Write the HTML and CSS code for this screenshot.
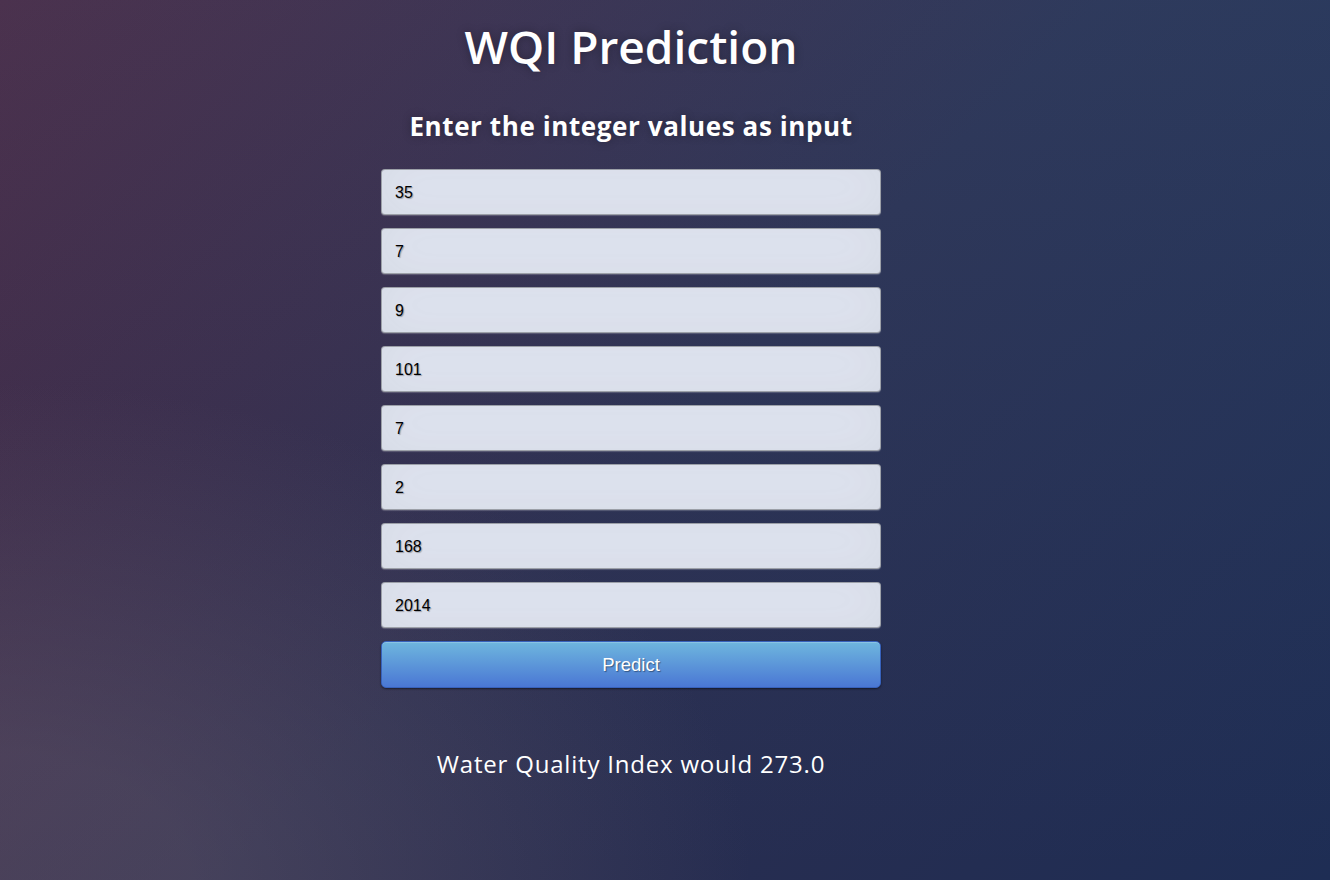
FILE: index.html
```html
<!DOCTYPE html>
<html lang="en">
<head>
<meta charset="utf-8">
<title>WQI Prediction</title>
<link rel="stylesheet" href="styles.css">
</head>
<body>
<div class="page">
  <div class="login">
    <h1 class="title">WQI Prediction</h1>
    <h2 class="subtitle">Enter the integer values as input</h2>
    <form class="form">
      <input class="field" type="text" value="35">
      <input class="field" type="text" value="7">
      <input class="field" type="text" value="9">
      <input class="field" type="text" value="101">
      <input class="field" type="text" value="7">
      <input class="field" type="text" value="2">
      <input class="field" type="text" value="168">
      <input class="field" type="text" value="2014">
      <button class="btn" type="button">Predict</button>
    </form>
    <p class="result">Water Quality Index would 273.0</p>
  </div>
</div>
</body>
</html>
```

FILE: styles.css
```css
* { box-sizing: border-box; }
html, body { margin: 0; width: 100%; height: 100%; overflow: hidden; }
body {
  font-family: "Open Sans", sans-serif;
  background:
    radial-gradient(ellipse farthest-corner at 0% 100%, rgba(115,105,118,.35) 10%, rgba(115,105,118,0) 40%),
    linear-gradient(to bottom, rgba(57,173,219,.1) 0%, rgba(57,173,219,0) 100%),
    linear-gradient(135deg, #4d243e 0%, #2d2d4e 50%, #1e2d54 100%);
}
.page { height: 100%; padding-top: 18px; }
.login { width: 500px; margin-left: 381px; }
.title {
  margin: 0;
  font-size: 46px;
  line-height: 56px;
  font-weight: 600;
  color: #fff;
  text-align: center;
  letter-spacing: 0;
  text-shadow: 0 0 10px rgba(0,0,0,0.3);
}
.subtitle {
  margin: 37px 0 28px;
  font-size: 26px;
  line-height: 30px;
  font-weight: 700;
  color: #fff;
  text-align: center;
  letter-spacing: 0.6px;
  text-shadow: 0 0 10px rgba(0,0,0,0.3);
}
.form { display: flex; flex-direction: column; gap: 13px; margin: 0; }
.field {
  display: block;
  width: 100%;
  height: 46px;
  margin: 0;
  padding: 2px 13px 0;
  font-family: "Liberation Sans", Arial, sans-serif;
  font-size: 16px;
  color: #000;
  background: #e0e5f1;
  border: 1px solid rgba(0,0,0,0.3);
  border-radius: 4px;
  outline: none;
  text-shadow: 1px 1px 1px rgba(0,0,0,0.3);
  box-shadow: inset 0 -5px 45px rgba(100,100,100,0.08), 0 1px 1px rgba(255,255,255,0.2);
}
.btn {
  display: block;
  width: 100%;
  height: 47px;
  margin: 0;
  font-family: "Liberation Sans", Arial, sans-serif;
  font-size: 18.5px;
  color: #fff;
  background: linear-gradient(to bottom, #6eb6de, #4a77d4);
  border: 1px solid #3762bc;
  border-radius: 5px;
  text-shadow: 1px 1px 1px rgba(0,0,0,0.4);
  box-shadow: inset 0 1px 0 rgba(255,255,255,0.2), 0 1px 2px rgba(0,0,0,0.5);
}
.result {
  margin: 61px 0 0;
  font-size: 24px;
  line-height: 30px;
  color: #fff;
  text-align: center;
  letter-spacing: 0.8px;
}
```
